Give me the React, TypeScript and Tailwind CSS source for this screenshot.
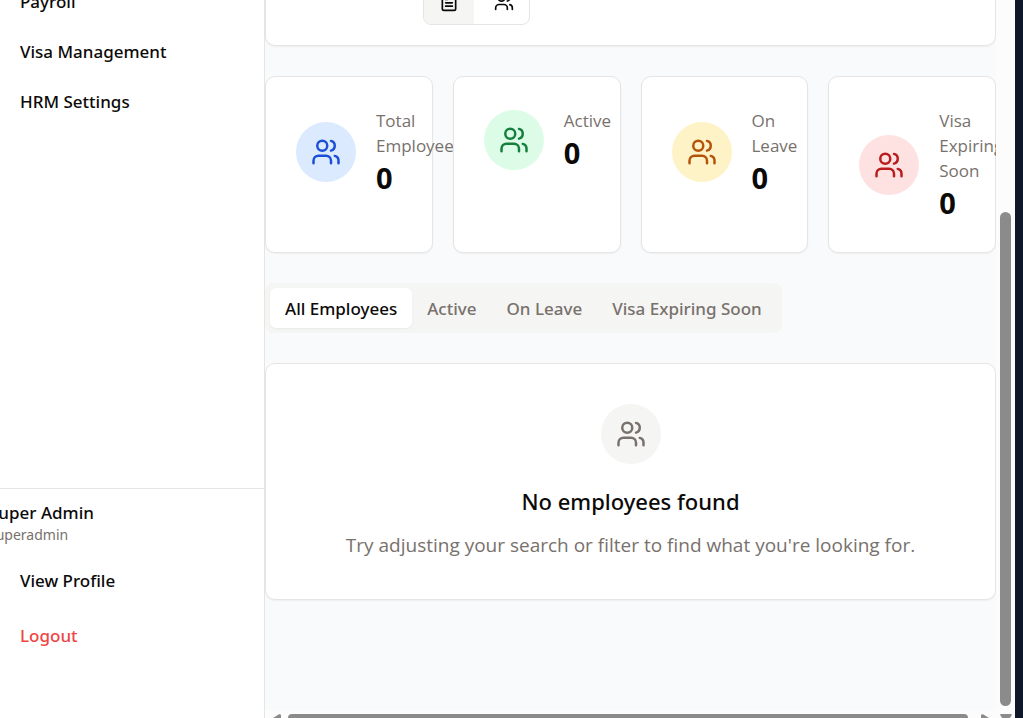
import { FileText, Users } from "lucide-react";

const navItems = ["Payroll", "Visa Management", "HRM Settings"];

const stats = [
  { label: "Total Employees", value: 0, tone: "bg-[#dbeafe] text-[#1d4ed8]" },
  { label: "Active", value: 0, tone: "bg-[#dcfce7] text-[#15803d]" },
  { label: "On Leave", value: 0, tone: "bg-[#fef3c7] text-[#b45309]" },
  { label: "Visa Expiring Soon", value: 0, tone: "bg-[#fee2e2] text-[#b91c1c]" },
];

const tabs = ["All Employees", "Active", "On Leave", "Visa Expiring Soon"];

const cardClass = "rounded-[10px] border border-[#e7e5e4] bg-white shadow-xs";
const mediumFont = "font-['Noto_Sans','Open_Sans',sans-serif] font-medium";

function Sidebar() {
  return (
    <aside
      className={`${mediumFont} flex w-[265px] shrink-0 flex-col overflow-hidden border-r border-[#e5e5e5] bg-white text-[17px]`}
    >
      <nav className="-mt-[23px] flex flex-1 flex-col">
        {navItems.map((item) => (
          <a key={item} href="#" className="flex h-[50px] items-center px-5">
            {item}
          </a>
        ))}
      </nav>
      <div className="h-[230px] border-t border-[#e5e5e5]">
        <div className="-ml-[11px] pt-3 pb-[11px]">
          <p className="leading-6">Super Admin</p>
          <p className="text-[14px] leading-5 font-normal text-[#78716c]">superadmin</p>
        </div>
        <div className="flex flex-col gap-[5px]">
          <a href="#" className="flex h-[50px] items-center px-5">
            View Profile
          </a>
          <button type="button" className="flex h-[50px] items-center px-5 text-[#ef4444]">
            Logout
          </button>
        </div>
      </div>
    </aside>
  );
}

function VerticalScrollbar() {
  return (
    <div className="flex w-[19px] shrink-0 flex-col items-center bg-[#fcfcfc]" aria-hidden="true">
      <div className="flex-1" />
      <div className="h-[494px] w-[11px] rounded-full bg-[#8b8b8b]" />
      <svg className="mt-2 h-1 w-3" viewBox="0 0 12 4">
        <path d="M1 0h10a.8.8 0 0 1 .7 1.3L9.8 4H2.2L.3 1.3A.8.8 0 0 1 1 0z" fill="#8b8b8b" />
      </svg>
    </div>
  );
}

function HorizontalScrollbar() {
  return (
    <div className="flex h-2 shrink-0 items-end gap-[7px] bg-[#fcfcfc] pr-[7px] pl-2" aria-hidden="true">
      <svg className="h-1 w-2" viewBox="0 0 8 4">
        <path d="M0 4 6 .3Q8-.3 8 1.500V4z" fill="#8b8b8b" />
      </svg>
      <div className="h-1 flex-1 rounded-t-[5px] bg-[#8b8b8b]" />
      <svg className="ml-1.5 h-1 w-2" viewBox="0 0 8 4">
        <path d="M8 4 2 .3Q0-.3 0 1.500V4z" fill="#8b8b8b" />
      </svg>
    </div>
  );
}

export default function App() {
  return (
    <div className="flex h-screen overflow-hidden bg-[#f9fafb] font-['Open_Sans','Noto_Sans',sans-serif] text-[#0c0a09]">
      <Sidebar />
      <div className="flex min-w-0 flex-1 flex-col overflow-hidden">
        <main className="-mt-[43px] flex flex-1 flex-col gap-[30px] bg-[#f9fafc]">
          <section className={`${cardClass} flex py-5 pl-[157px]`}>
            <div className="flex gap-[5px] overflow-hidden rounded-lg border border-[#e7e5e4]">
              <button
                type="button"
                aria-label="List view"
                className="flex h-[45px] w-[50px] items-center justify-center bg-[#f5f5f4]"
              >
                <FileText size={20} />
              </button>
              <button
                type="button"
                aria-label="Team view"
                className="flex h-[45px] w-[50px] items-center justify-center"
              >
                <Users size={20} />
              </button>
            </div>
          </section>

          <section className="grid grid-cols-4 gap-5">
            {stats.map((stat) => (
              <div key={stat.label} className={`${cardClass} relative px-[30px] py-[29px]`}>
                <div className="flex min-h-[62px] items-center gap-5">
                  <div className={`flex size-[60px] shrink-0 items-center justify-center rounded-full ${stat.tone}`}>
                    <Users size={30} />
                  </div>
                  <div className="min-w-0 pt-0.5">
                    <p className="text-[17px] leading-[25px] text-[#78716c]">{stat.label}</p>
                    <p className="text-[29px] leading-10 font-bold">{stat.value}</p>
                  </div>
                </div>
              </div>
            ))}
          </section>

          <div role="tablist" className="flex h-[50px] self-start rounded-lg bg-[#f5f5f4] p-[5px]">
            {tabs.map((tab, i) => (
              <button
                key={tab}
                type="button"
                role="tab"
                aria-selected={i === 0}
                className={`${mediumFont} rounded-md px-[15px] pt-0.5 text-[17px] whitespace-nowrap ${
                  i === 0 ? "bg-white shadow-xs" : "text-[#78716c]"
                }`}
              >
                {tab}
              </button>
            ))}
          </div>

          <section className={`${cardClass} flex flex-col items-center p-10 text-center`}>
            <div className="flex size-[60px] items-center justify-center rounded-full bg-[#f5f5f4] text-[#78716c]">
              <Users size={30} />
            </div>
            <h3 className={`${mediumFont} mt-5 text-[22px] leading-[35px]`}>No employees found</h3>
            <p className="mt-3 text-[19px] leading-7 text-[#78716c]">
              Try adjusting your search or filter to find what you're looking for.
            </p>
          </section>
        </main>
        <HorizontalScrollbar />
      </div>
      <VerticalScrollbar />
      <div className="w-2 shrink-0 bg-[#0f1729]" />
    </div>
  );
}
